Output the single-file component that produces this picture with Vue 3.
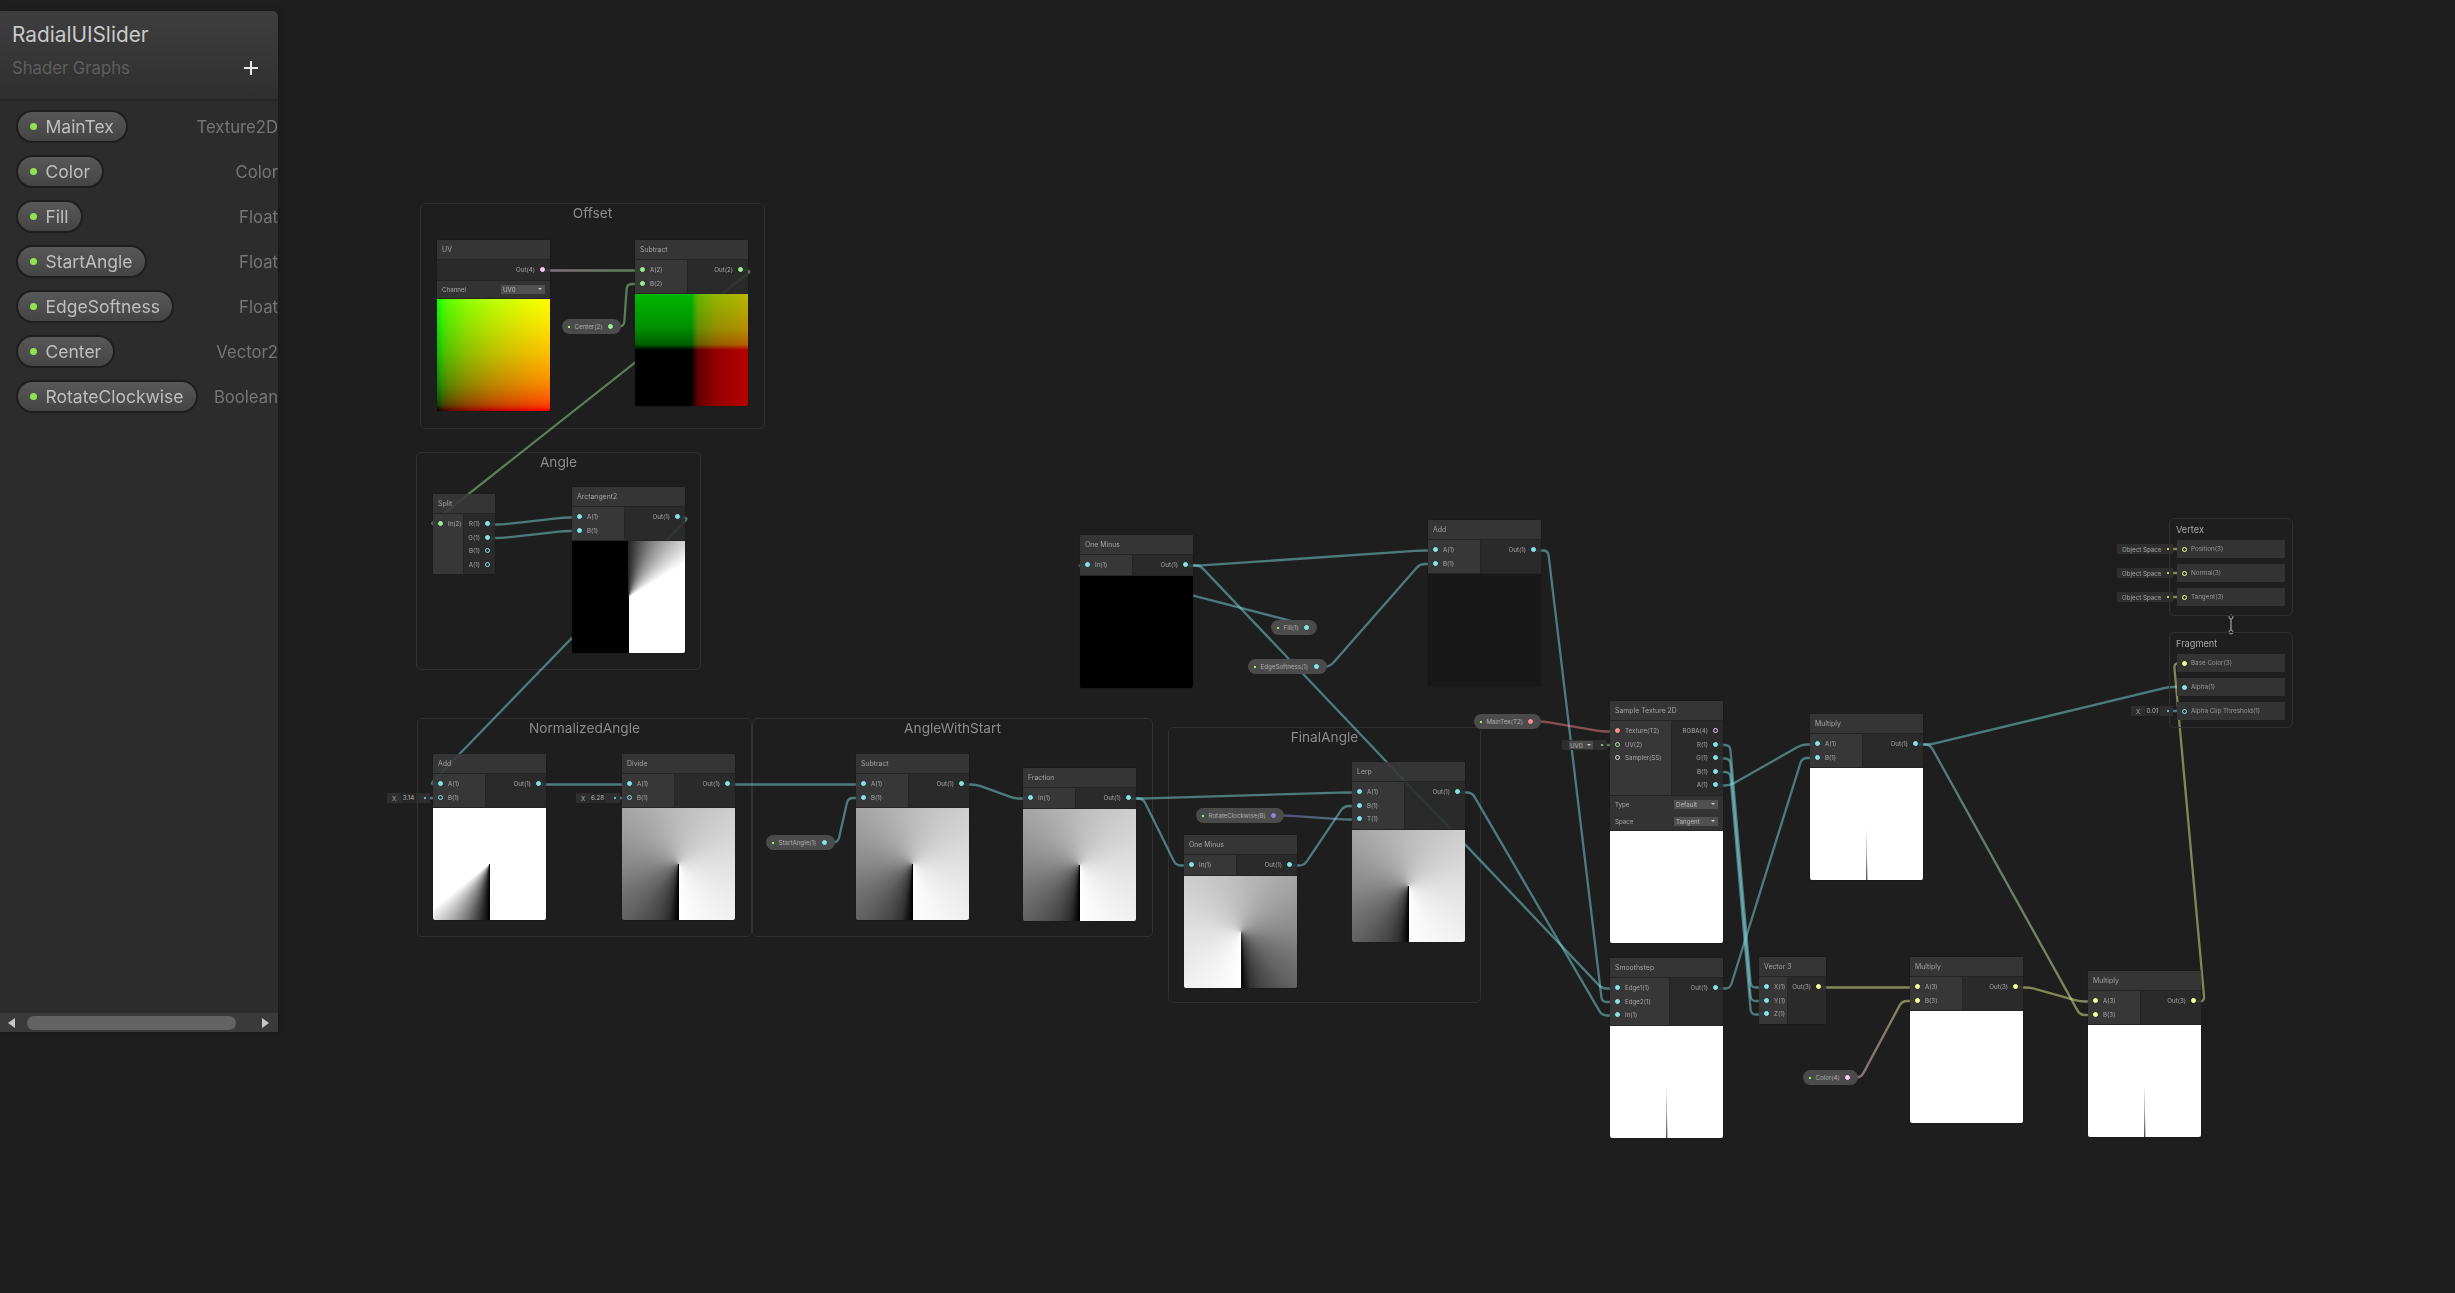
<script setup>
const properties = [
  ['MainTex', 'Texture2D'], ['Color', 'Color'], ['Fill', 'Float'], ['StartAngle', 'Float'],
  ['EdgeSoftness', 'Float'], ['Center', 'Vector2'], ['RotateClockwise', 'Boolean'],
]

const frames = [
  { title: 'Offset', x: 420, y: 203, w: 345, h: 226 },
  { title: 'Angle', x: 416, y: 452, w: 285, h: 218 },
  { title: 'NormalizedAngle', x: 417, y: 718, w: 335, h: 219 },
  { title: 'AngleWithStart', x: 752, y: 718, w: 401, h: 219 },
  { title: 'FinalAngle', x: 1168, y: 727, w: 313, h: 276 },
]

const F1 = (l, on = 1) => [l, 'f', on]
const nodes = [
  { id: 'uv', title: 'UV', x: 437, y: 240, w: 113, lw: 0, ins: [], outs: [['Out(4)', 'v4', 1]], controls: [['Channel', 'UV0']], preview: 'uv' },
  { id: 'sub0', title: 'Subtract', x: 635, y: 240, w: 113, lw: 53, ins: [['A(2)', 'v2', 1], ['B(2)', 'v2', 1]], outs: [['Out(2)', 'v2', 1]], preview: 'offset' },
  { id: 'split', title: 'Split', x: 433, y: 494, w: 62, lw: 31, ins: [['In(2)', 'v2', 1]], outs: [F1('R(1)'), F1('G(1)'), F1('B(1)', 0), F1('A(1)', 0)] },
  { id: 'atan', title: 'Arctangent2', x: 572, y: 487, w: 113, lw: 53, ins: [F1('A(1)'), F1('B(1)')], outs: [F1('Out(1)')], preview: 'atan' },
  { id: 'add0', title: 'Add', x: 433, y: 754, w: 113, lw: 53, ins: [F1('A(1)'), F1('B(1)', 0)], outs: [F1('Out(1)')], preview: 'add' },
  { id: 'div', title: 'Divide', x: 622, y: 754, w: 113, lw: 53, ins: [F1('A(1)'), F1('B(1)', 0)], outs: [F1('Out(1)')], preview: 'angle' },
  { id: 'sub1', title: 'Subtract', x: 856, y: 754, w: 113, lw: 53, ins: [F1('A(1)'), F1('B(1)')], outs: [F1('Out(1)')], preview: 'angle' },
  { id: 'frac', title: 'Fraction', x: 1023, y: 768, w: 113, lw: 53, ins: [F1('In(1)')], outs: [F1('Out(1)')], preview: 'angle' },
  { id: 'lerp', title: 'Lerp', x: 1352, y: 762, w: 113, lw: 53, ins: [F1('A(1)'), F1('B(1)'), F1('T(1)')], outs: [F1('Out(1)')], preview: 'angle' },
  { id: 'one1', title: 'One Minus', x: 1184, y: 835, w: 113, lw: 53, ins: [F1('In(1)')], outs: [F1('Out(1)')], preview: 'inv' },
  { id: 'one0', title: 'One Minus', x: 1080, y: 535, w: 113, lw: 53, ins: [F1('In(1)')], outs: [F1('Out(1)')], preview: 'black' },
  { id: 'add1', title: 'Add', x: 1428, y: 520, w: 113, lw: 53, ins: [F1('A(1)'), F1('B(1)')], outs: [F1('Out(1)')], preview: 'dark' },
  {
    id: 'tex', title: 'Sample Texture 2D', x: 1610, y: 701, w: 113, lw: 62,
    ins: [['Texture(T2)', 't', 1], ['UV(2)', 'v2', 0], ['Sampler(SS)', 's', 0]],
    outs: [['RGBA(4)', 'v4', 0], F1('R(1)'), F1('G(1)'), F1('B(1)'), F1('A(1)')],
    controls: [['Type', 'Default'], ['Space', 'Tangent']], preview: 'white',
  },
  { id: 'mul0', title: 'Multiply', x: 1810, y: 714, w: 113, lw: 53, ins: [F1('A(1)'), F1('B(1)')], outs: [F1('Out(1)')], preview: 'wedge' },
  { id: 'smooth', title: 'Smoothstep', x: 1610, y: 958, w: 113, lw: 60, ins: [F1('Edge1(1)'), F1('Edge2(1)'), F1('In(1)')], outs: [F1('Out(1)')], preview: 'wedge' },
  { id: 'vec3', title: 'Vector 3', x: 1759, y: 957, w: 67, lw: 29, ins: [F1('X(1)'), F1('Y(1)'), F1('Z(1)')], outs: [['Out(3)', 'v3', 1]] },
  { id: 'mul1', title: 'Multiply', x: 1910, y: 957, w: 113, lw: 53, ins: [['A(3)', 'v3', 1], ['B(3)', 'v3', 1]], outs: [['Out(3)', 'v3', 1]], preview: 'white' },
  { id: 'mul2', title: 'Multiply', x: 2088, y: 971, w: 113, lw: 53, ins: [['A(3)', 'v3', 1], ['B(3)', 'v3', 1]], outs: [['Out(3)', 'v3', 1]], preview: 'wedge' },
]

const pills = [
  { id: 'center', label: 'Center(2)', x: 562, y: 319, w: 59, type: 'v2' },
  { id: 'start', label: 'StartAngle(1)', x: 766, y: 835, w: 69, type: 'f' },
  { id: 'rotate', label: 'RotateClockwise(B)', x: 1196, y: 808, w: 88, type: 'b' },
  { id: 'fill', label: 'Fill(1)', x: 1271, y: 620, w: 46, type: 'f' },
  { id: 'edge', label: 'EdgeSoftness(1)', x: 1248, y: 659, w: 79, type: 'f' },
  { id: 'main', label: 'MainTex(T2)', x: 1474, y: 714, w: 67, type: 't' },
  { id: 'color', label: 'Color(4)', x: 1803, y: 1070, w: 55, type: 'v4' },
]

const fields = [
  { id: 'x0', kind: 'x', label: 'X', value: '3.14', x: 387, y: 793, w: 43, type: 'f' },
  { id: 'x1', kind: 'x', label: 'X', value: '6.28', x: 576, y: 793, w: 44, type: 'f' },
  { id: 'uv0', kind: 'drop', value: 'UV0', x: 1562, y: 740, w: 45, type: 'v2' },
  { id: 'os0', kind: 'text', value: 'Object Space', x: 2117, y: 544, w: 56, type: 'v3' },
  { id: 'os1', kind: 'text', value: 'Object Space', x: 2117, y: 568, w: 56, type: 'v3' },
  { id: 'os2', kind: 'text', value: 'Object Space', x: 2117, y: 592, w: 56, type: 'v3' },
  { id: 'x2', kind: 'x', label: 'X', value: '0.01', x: 2131, y: 706, w: 42, type: 'f' },
]

const stacks = [
  {
    title: 'Vertex', y: 518, h: 98,
    rows: [['Position(3)', 'v3', 0], ['Normal(3)', 'v3', 0], ['Tangent(3)', 'v3', 0]],
  },
  {
    title: 'Fragment', y: 632, h: 96,
    rows: [['Base Color(3)', 'v3', 1], ['Alpha(1)', 'f', 1], ['Alpha Clip Threshold(1)', 'f', 0]],
  },
]

const COLORS = { f: '#84e4e7', v2: '#9aef92', v3: '#f6ff9a', v4: '#fbcbf4', t: '#ff8b8b', b: '#9481e6' }

const byId = Object.fromEntries(nodes.map(n => [n.id, n]))
const pillById = Object.fromEntries(pills.map(p => [p.id, p]))
const fieldById = Object.fromEntries(fields.map(f => [f.id, f]))

const out = (id, i = 0) => {
  if (pillById[id]) { const p = pillById[id]; return { x: p.x + p.w - 11, y: p.y + 7.5, c: p.type } }
  if (fieldById[id]) { const f = fieldById[id]; return { x: f.x + f.w - 5.5, y: f.y + 5, c: f.type } }
  const n = byId[id]
  return { x: n.x + n.w - 7, y: n.y + 30.5 + 13.5 * i, c: n.outs[i][1] }
}
const inp = (id, i = 0) => {
  const n = byId[id]
  return { x: n.x + 7.5, y: n.y + 30.5 + 13.5 * i, c: n.ins[i][1] }
}
const master = (i) => ({ x: 2184.5, y: [549, 573, 597, 663, 687, 711][i], c: i === 4 || i === 5 ? 'f' : 'v3' })

const links = [
  [out('uv'), inp('sub0', 0)], [out('center'), inp('sub0', 1)], [out('sub0'), inp('split')],
  [out('split', 0), inp('atan', 0)], [out('split', 1), inp('atan', 1)], [out('atan'), inp('add0', 0)],
  [out('x0'), inp('add0', 1)], [out('add0'), inp('div', 0)], [out('x1'), inp('div', 1)],
  [out('div'), inp('sub1', 0)], [out('start'), inp('sub1', 1)], [out('sub1'), inp('frac')],
  [out('frac'), inp('lerp', 0)], [out('frac'), inp('one1')], [out('one1'), inp('lerp', 1)],
  [out('rotate'), inp('lerp', 2)], [out('fill'), inp('one0')], [out('one0'), inp('add1', 0)],
  [out('edge'), inp('add1', 1)], [out('one0'), inp('smooth', 0)], [out('add1'), inp('smooth', 1)],
  [out('lerp'), inp('smooth', 2)], [out('main'), inp('tex', 0)], [out('uv0'), inp('tex', 1)],
  [out('tex', 1), inp('vec3', 0)], [out('tex', 2), inp('vec3', 1)], [out('tex', 3), inp('vec3', 2)],
  [out('tex', 4), inp('mul0', 0)], [out('smooth'), inp('mul0', 1)], [out('vec3'), inp('mul1', 0)],
  [out('color'), inp('mul1', 1)], [out('mul1'), inp('mul2', 0)], [out('mul0'), inp('mul2', 1)],
  [out('mul0'), master(4)], [out('mul2'), master(3)],
  [out('os0'), master(0)], [out('os1'), master(1)], [out('os2'), master(2)], [out('x2'), master(5)],
]

function route(a, b) {
  const span = b.x - a.x
  if (span > 0 && span < 30) return `M${a.x} ${a.y}L${b.x} ${b.y}`
  if (Math.abs(a.y - b.y) < 1) return `M${a.x} ${a.y}L${b.x} ${b.y}`
  const back = span < 0
  const p = { x: a.x + (back ? 10.5 : 14), y: a.y }
  const q = { x: b.x - (back ? 10.5 : 15.5), y: b.y }
  const len = Math.hypot(q.x - p.x, q.y - p.y) || 1
  const r = Math.min(5, len / 2)
  const ux = (q.x - p.x) / len, uy = (q.y - p.y) / len
  return `M${a.x} ${a.y}L${p.x - 5} ${p.y}Q${p.x} ${p.y} ${p.x + ux * r} ${p.y + uy * r}` +
    `L${q.x - ux * r} ${q.y - uy * r}Q${q.x} ${q.y} ${q.x + 5} ${q.y}L${b.x} ${b.y}`
}

const edges = links.map(([a, b], i) => ({
  id: 'edge' + i, d: route(a, b),
  x1: a.x, y1: a.y, x2: b.x + (Math.abs(b.x - a.x) < 1 ? 1 : 0), y2: b.y,
  c1: COLORS[a.c], c2: COLORS[b.c],
}))
</script>

<template>
  <div class="canvas">
    <div class="graph">
      <div
        v-for="f in frames" :key="f.title" class="frame"
        :style="{ left: f.x + 'px', top: f.y + 'px', width: f.w + 'px', height: f.h + 'px' }"
      >{{ f.title }}</div>

      <svg class="wires" width="2455" height="1293" viewBox="0 0 2455 1293">
        <defs>
          <linearGradient
            v-for="e in edges" :id="e.id" :key="e.id" gradientUnits="userSpaceOnUse"
            :x1="e.x1" :y1="e.y1" :x2="e.x2" :y2="e.y2"
          >
            <stop offset="0" :stop-color="e.c1" />
            <stop offset="1" :stop-color="e.c2" />
          </linearGradient>
        </defs>
        <path
          v-for="e in edges" :key="e.id" :d="e.d" fill="none" :stroke="`url(#${e.id})`"
          stroke-width="2.3" stroke-opacity=".47" stroke-linecap="round"
        />
        <path d="M2231 619V630" stroke="#6f6f6f" stroke-width="2" />
        <circle cx="2231" cy="617" r="2" fill="#1e1e1e" stroke="#a5a5a5" />
        <circle cx="2231" cy="632" r="2" fill="#1e1e1e" stroke="#a5a5a5" />
      </svg>

      <div
        v-for="s in stacks" :key="s.title" class="stack"
        :style="{ top: s.y + 'px', height: s.h + 'px' }"
      >
        <div class="stack-title">{{ s.title }}</div>
        <div v-for="r in s.rows" :key="r[0]" class="stack-row">
          <i class="port" :class="['c-' + r[1], { on: r[2] }]"></i>
          <span>{{ r[0] }}</span>
        </div>
      </div>

      <div
        v-for="n in nodes" :key="n.id" class="node"
        :style="{ left: n.x + 'px', top: n.y + 'px', width: n.w + 'px' }"
      >
        <div class="node-title">{{ n.title }}</div>
        <div class="ports">
          <div class="col col-in" :style="{ width: n.lw + 'px' }">
            <div v-for="p in n.ins" :key="p[0]" class="port-row">
              <i class="port" :class="['c-' + p[1], { on: p[2] }]"></i>
              <span>{{ p[0] }}</span>
            </div>
          </div>
          <div class="col col-out">
            <div v-for="p in n.outs" :key="p[0]" class="port-row">
              <span>{{ p[0] }}</span>
              <i class="port" :class="['c-' + p[1], { on: p[2] }]"></i>
            </div>
          </div>
        </div>
        <div v-if="n.controls" class="controls">
          <div v-for="c in n.controls" :key="c[0]" class="control">
            <span>{{ c[0] }}</span>
            <span class="select">{{ c[1] }}<b class="caret"></b></span>
          </div>
        </div>
        <div v-if="n.preview" class="preview" :class="'p-' + n.preview"></div>
      </div>

      <div
        v-for="p in pills" :key="p.id" class="pill"
        :style="{ left: p.x + 'px', top: p.y + 'px', width: p.w + 'px' }"
      >
        <i class="pill-dot"></i>
        <span class="pill-label">{{ p.label }}</span>
        <i class="port on" :class="'c-' + p.type"></i>
      </div>

      <div
        v-for="f in fields" :key="f.id" class="field"
        :style="{ left: f.x + 'px', top: f.y + 'px', width: f.w + 'px' }"
      >
        <template v-if="f.kind === 'x'">
          <span class="field-key">{{ f.label }}</span>
          <span class="field-val">{{ f.value }}</span>
        </template>
        <span v-else-if="f.kind === 'drop'" class="field-drop">{{ f.value }}<b class="caret"></b></span>
        <span v-else class="field-text">{{ f.value }}</span>
        <i class="field-dot" :class="'c-' + f.type"></i>
      </div>
    </div>

    <aside class="board">
      <header class="board-head">
        <div class="board-title">RadialUISlider</div>
        <div class="board-sub">
          <span>Shader Graphs</span>
          <svg width="14" height="14" viewBox="0 0 14 14"><path d="M7 0V14M0 7H14" stroke="#e8e8e8" stroke-width="2" /></svg>
        </div>
      </header>
      <div class="board-list">
        <div v-for="p in properties" :key="p[0]" class="prop">
          <span class="prop-pill"><i class="prop-dot"></i>{{ p[0] }}</span>
          <span class="prop-type">{{ p[1] }}</span>
        </div>
      </div>
      <div class="scrollbar">
        <svg width="8" height="10" viewBox="0 0 8 10"><path d="M7 0V10L0 5Z" fill="#c8c8c8" /></svg>
        <div class="scroll-track"><div class="scroll-thumb"></div></div>
        <svg width="8" height="10" viewBox="0 0 8 10"><path d="M0 0V10L7 5Z" fill="#c8c8c8" /></svg>
      </div>
    </aside>
  </div>
</template>

<style>
html, body { margin: 0; background: #1e1e1e; }
</style>

<style scoped>
.canvas {
  position: relative; width: 2455px; height: 1293px; overflow: hidden;
  background: #1e1e1e; font-family: Inter, "Liberation Sans", sans-serif;
}
.graph { position: absolute; inset: 0; filter: blur(.4px); }
.wires { position: absolute; left: 0; top: 0; }

.frame {
  position: absolute; box-sizing: border-box; border: 1px solid #303030; border-radius: 5px;
  text-align: center; color: #8c8c8c; font-size: 13.7px; line-height: 19px;
}

.node {
  position: absolute; font-size: 6.2px; color: #a8a8a8; box-shadow: 0 0 1px #161616;
}
.node-title {
  box-sizing: border-box; height: 20px; padding-left: 5px; line-height: 19px; font-size: 6.9px;
  color: #a4a4a4; background: rgba(57, 57, 57, .88); border-bottom: 1px solid #242424;
}
.ports { display: flex; background: rgba(44, 44, 44, .88); }
.col { box-sizing: border-box; padding: 3px 0; }
.col-in { flex: none; background: rgba(58, 58, 58, .88); padding-left: 5px; border-right: 1px solid #252525; }
.col-out { flex: 1; min-width: 0; padding-right: 5px; }
.col-in:empty { padding: 0; border: 0; }
.port-row { display: flex; align-items: center; height: 13.5px; gap: 5px; white-space: nowrap; }
.col-out .port-row { justify-content: flex-end; }
.port {
  flex: none; box-sizing: border-box; width: 5px; height: 5px; border-radius: 50%;
  border: 1px solid currentColor; display: block;
}
.port.on { background: currentColor; }
.c-f { color: #84e4e7; }
.c-v2 { color: #9aef92; }
.c-v3 { color: #f6ff9a; }
.c-v4 { color: #fbcbf4; }
.c-t { color: #ff8b8b; }
.c-b { color: #9481e6; }
.c-s { color: #dddddd; }

.controls { background: #333333; border-top: 1px solid #242424; padding: 0 5px; }
.control { display: flex; align-items: center; justify-content: space-between; height: 17px; color: #a8a8a8; }
.select {
  box-sizing: border-box; display: flex; align-items: center; justify-content: space-between;
  width: 44px; height: 9px; padding: 0 2px; background: #505050; color: #bbbbbb;
}
.caret {
  display: block; width: 0; height: 0; margin-right: 1px;
  border-left: 2px solid transparent; border-right: 2px solid transparent; border-top: 2.5px solid #cccccc;
}

.preview { height: 113px; border-radius: 0 0 2px 2px; border-top: 1px solid #242424; box-sizing: border-box; }
.p-uv {
  background-image:
    linear-gradient(to top, #000000 0%, #003f00 5%, #005900 10%, #007c00 20%, #009500 30%, #00bc00 50%, #00e100 75%, #00ff00 100%),
    linear-gradient(to right, #000000 0%, #3f0000 5%, #590000 10%, #7c0000 20%, #950000 30%, #bc0000 50%, #e10000 75%, #ff0000 100%);
  background-blend-mode: screen;
}
.p-offset {
  background-image:
    linear-gradient(to top, #000000 50%, #005f00 55%, #009000 70%, #00b800 100%),
    linear-gradient(to right, #000000 50%, #5f0000 55%, #900000 70%, #b80000 100%);
  background-blend-mode: screen;
}
.p-atan { background: conic-gradient(#262626 0deg, #8a8a8a 25deg, #ffffff 59deg, #ffffff 180deg, #000000 180deg, #000000 360deg); }
.p-add { background: conic-gradient(from 180deg, #000000 0deg, #777777 22deg, #ffffff 52deg, #ffffff 360deg); }
.p-angle {
  background: conic-gradient(from 180deg, #000000 0deg, #323232 11deg, #474747 22deg, #636363 45deg, #898989 90deg,
    #a5a5a5 135deg, #bcbcbc 180deg, #cecece 225deg, #e1e1e1 270deg, #f0f0f0 315deg, #ffffff 360deg);
}
.p-inv {
  background: conic-gradient(from 180deg, #ffffff 0deg, #f0f0f0 45deg, #e1e1e1 90deg, #cecece 135deg, #bcbcbc 180deg,
    #a5a5a5 225deg, #898989 270deg, #636363 315deg, #474747 338deg, #323232 349deg, #000000 360deg);
}
.p-white { background: #ffffff; }
.p-black { background: #000000; }
.p-dark { background: #181818; }
.p-wedge {
  background-image:
    linear-gradient(to bottom, #ffffff 54%, rgba(255, 255, 255, 0) 100%),
    conic-gradient(from 178deg at 50% 54%, #ffffff 0deg, #555555 2deg, #ffffff 2.5deg, #ffffff 360deg);
}

.pill {
  position: absolute; box-sizing: border-box; height: 15px; border-radius: 8px; background: #4b4b4b;
  display: flex; align-items: center; padding: 0 8.5px 0 5.5px; font-size: 6.2px; color: #aeaeae; white-space: nowrap;
}
.pill-dot { flex: none; width: 2px; height: 2px; background: #a0f050; margin-right: 5px; }
.pill-label { flex: 1; min-width: 0; }

.field {
  position: absolute; box-sizing: border-box; height: 10px; background: #2e2e2e; display: flex; align-items: center;
  font-size: 6.2px; color: #a5a5a5; white-space: nowrap; padding-left: 5px;
}
.field-key { width: 9px; flex: none; }
.field-val { flex: none; width: 15px; background: #262626; color: #b4b4b4; text-align: center; line-height: 10px; }
.field-drop {
  display: flex; align-items: center; justify-content: space-between; box-sizing: border-box; flex: none;
  margin-left: 2px; width: 24px; height: 8px; padding: 0 1px; background: #4a4a4a; color: #b5b5b5;
}
.field-text { flex: none; }
.field-dot {
  position: absolute; right: 4px; top: 4px; width: 2px; height: 2px; border-radius: 50%; background: currentColor;
}

.stack {
  position: absolute; left: 2169px; width: 124px; box-sizing: border-box; border: 1px solid #303030; border-radius: 6px;
}
.stack-title { height: 21px; padding-left: 6px; line-height: 21px; font-size: 9.2px; color: #a8a8a8; }
.stack-row {
  box-sizing: border-box; display: flex; align-items: center; gap: 4px; margin: 0 7px 6px; height: 18px; padding-left: 5px;
  background: #333333; color: #989898; font-size: 6.3px;
}

.board {
  position: absolute; left: 0; top: 11px; width: 278px; height: 1021px; display: flex; flex-direction: column;
  background: #2c2c2c; border-radius: 0 6px 0 0; overflow: hidden; box-shadow: 4px 0 6px rgba(0, 0, 0, .12);
}
.board-head {
  box-sizing: border-box; flex: none; height: 90px; padding: 10px 12px 0;
  background: linear-gradient(#3e3e3e, #2f2f2f); border-bottom: 2px solid #262626;
}
.board-title { font-size: 20.8px; line-height: 28px; color: #c9c9c9; }
.board-sub {
  display: flex; justify-content: space-between; align-items: center; margin-top: 9px; padding-right: 8px;
  font-size: 16.7px; line-height: 20px; color: #5e5e5e;
}
.board-list { flex: 1; min-height: 0; padding-top: 3px; }
.prop { display: flex; justify-content: space-between; align-items: center; height: 45px; padding-left: 16px; }
.prop-pill {
  box-sizing: border-box; display: flex; align-items: center; height: 33px; padding: 0 12px 0 11.5px;
  border: 2px solid #1e1e1e; border-radius: 17px; background: linear-gradient(#585858, #444444);
  color: #bfbfbf; font-size: 17.5px; white-space: nowrap;
}
.prop-dot { flex: none; width: 7px; height: 7px; border-radius: 50%; background: #8fe34f; margin-right: 9px; }
.prop-type { color: #767676; font-size: 16.7px; white-space: nowrap; }
.scrollbar {
  flex: none; box-sizing: border-box; height: 19px; display: flex; align-items: center; gap: 11px; padding: 0 8px;
  background: #3a3a3a;
}
.scrollbar svg { flex: none; }
.scroll-track { flex: 1; }
.scroll-thumb { width: 209px; height: 14px; border-radius: 7px; background: #636363; }
</style>
